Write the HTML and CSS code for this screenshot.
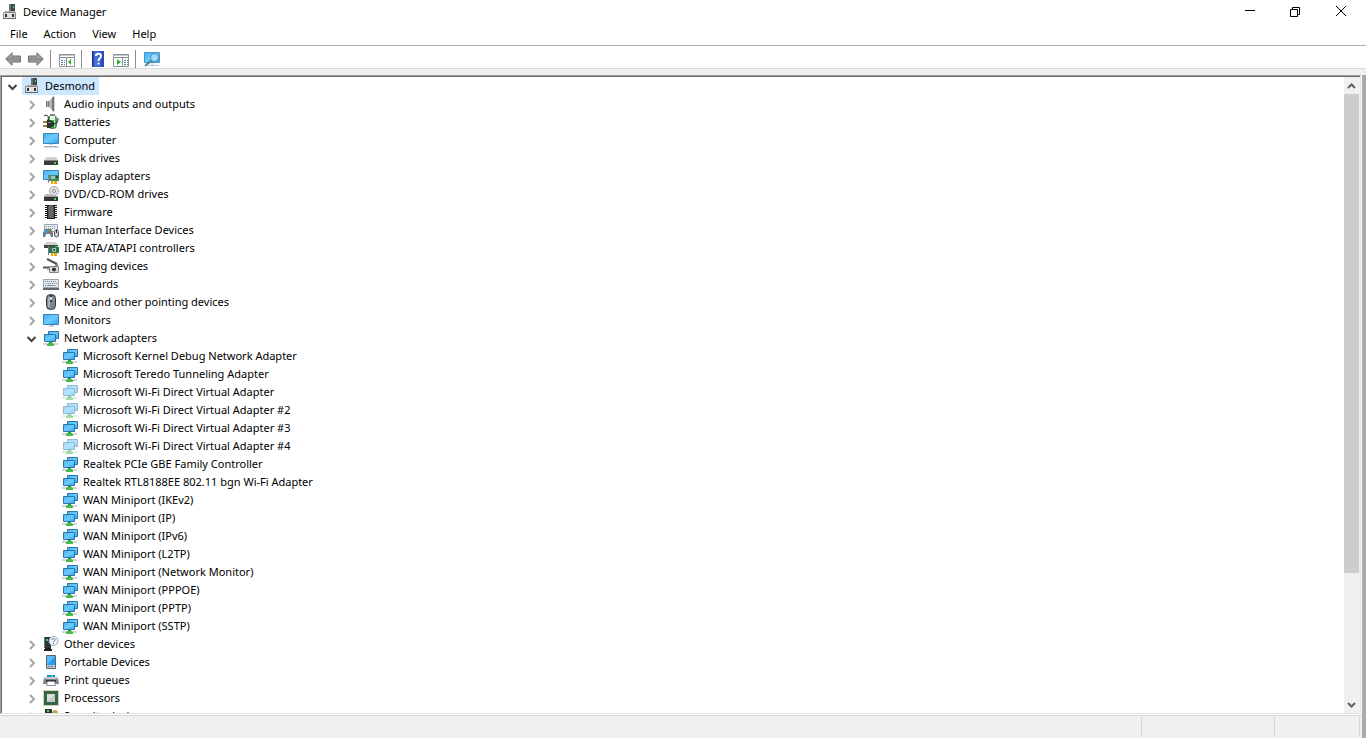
FILE: index.html
```
<!DOCTYPE html>
<html lang="en">
<head>
  <meta charset="UTF-8">
  <title>Device Manager</title>
  <link rel="stylesheet" href="styles.css">
</head>
<body>

<!-- Icon set, all on a 16px grid -->
<svg class="sprite" aria-hidden="true">
  <defs>
    <linearGradient id="screen" x1="0" y1="0" x2="1" y2="1">
      <stop offset="0" stop-color="#3fb0f5"/>
      <stop offset="0.5" stop-color="#6ccbff"/>
      <stop offset="1" stop-color="#2ea5f3"/>
    </linearGradient>
    <linearGradient id="arrowFill" x1="0" y1="0" x2="0" y2="1">
      <stop offset="0" stop-color="#c4c4c4"/>
      <stop offset="0.5" stop-color="#8a8a8a"/>
      <stop offset="1" stop-color="#b8b8b8"/>
    </linearGradient>
    <linearGradient id="helpFill" x1="0" y1="0" x2="1" y2="0">
      <stop offset="0" stop-color="#2438a0"/>
      <stop offset="0.3" stop-color="#4a74dc"/>
      <stop offset="1" stop-color="#2746b8"/>
    </linearGradient>
  </defs>

  <symbol id="i-right" viewBox="0 0 16 16"><path d="M7 5l4 4-4 4" fill="none" stroke="#a6a6a6" stroke-width="2"/></symbol>
  <symbol id="i-down" viewBox="0 0 16 16"><path d="M4.500 7l4 4 4-4" fill="none" stroke="#404040" stroke-width="2"/></symbol>

  <symbol id="i-device" viewBox="0 0 16 16">
    <path d="M7 0h6v8H7z" fill="#42464a"/><path d="M7 0h2v8H7z" fill="#6b7074"/><path d="M11 2h1v2h-1z" fill="#58d568"/>
    <path d="M3 7h10v2H3z" fill="#a9a9a9"/><path d="M1.500 8.500h12v6h-12z" fill="#e2e2e2" stroke="#8b8b8b"/><path d="M1 14h13v1H1z" fill="#666"/>
    <path d="M3 10h2v3H3zM10 10h2v3h-2z" fill="#303030"/>
  </symbol>
  <symbol id="i-audio" viewBox="0 0 16 16">
    <path d="M3 5h3v6H3z" fill="#737b82"/><path d="M6 5l5-5v16l-5-5z" fill="#aeb3b7"/>
    <path d="M9 2l2-2v16l-2-2z" fill="#747b81"/><path d="M11 1h1v14h-1z" fill="#cfd2d4"/><path d="M4 5h1v6H4z" fill="#a5acb2"/>
  </symbol>
  <symbol id="i-battery" viewBox="0 0 16 16">
    <rect x="5.500" y="1.500" width="8" height="13" rx="3" fill="#2fbd40" stroke="#66736c"/>
    <path d="M7 2h5v4H7z" fill="#e4f3e5"/><path d="M7 0h5v1H7z" fill="#858d88"/><path d="M11 6h1v7h-1z" fill="#9af09c"/>
    <path d="M0 7h4v2H0zM0 11h4v2H0z" fill="#a87e32"/>
    <path d="M4 6h3l4 2v4l-4 2H4z" fill="#303030"/><path d="M5 8h3v1H5z" fill="#888"/>
    <path d="M10 10c5 0 5-3 5-6M1 2c3-2 5 0 4 4" fill="none" stroke="#222"/>
  </symbol>
  <symbol id="i-computer" viewBox="0 0 16 16">
    <path d="M.5 1.500h15v10H.5z" fill="url(#screen)" stroke="#3e86b8"/>
    <path d="M6 12h4v1H6z" fill="#c5d4df"/><path d="M1 14h14v1H1z" fill="#9fb8c9"/><path d="M0 15h16v1H0z" fill="#d5dde3"/>
  </symbol>
  <symbol id="i-monitor" viewBox="0 0 16 16">
    <path d="M.5 2.500h15v10H.5z" fill="url(#screen)" stroke="#3b7fae"/>
    <path d="M7 13h3v1H7z" fill="#a7b8c4"/><path d="M5 14h7v1H5z" fill="#cfdbe3"/>
  </symbol>
  <symbol id="i-disk" viewBox="0 0 16 16">
    <path d="M3 7h10l2 3H1z" fill="#d2d2d2"/><path d="M1 10h14v5H1z" fill="#3b3b3b"/><path d="M1 10h14v1H1z" fill="#858585"/><path d="M11 12h2v2h-2z" fill="#3fd84f"/>
  </symbol>
  <symbol id="i-display" viewBox="0 0 16 16">
    <path d="M.5 2.500h15v9H.5z" fill="url(#screen)" stroke="#3e86b8"/>
    <path d="M6 7h10v6H6z" fill="#3d8b68"/><path d="M8 8h4v3H8z" fill="#9bc7a9"/><path d="M13 8h2v2h-2z" fill="#234f3c"/><path d="M5 6h1v9H5z" fill="#888"/>
    <path d="M8 13h6v3H8z" fill="#eea31b"/><path d="M10 13h1v3h-1z" fill="#fff0a0"/>
  </symbol>
  <symbol id="i-dvd" viewBox="0 0 16 16">
    <circle cx="11" cy="5" r="4.500" fill="#dfe1e2" stroke="#a8a8a8"/><circle cx="11" cy="5" r="1.500" fill="#fff" stroke="#888"/>
    <path d="M3 8h3l4 2h5H1z" fill="#b9b9b9"/><path d="M1 10h14v5H1z" fill="#343434"/><path d="M1 10h14v1H1z" fill="#999"/><path d="M11 12h2v2h-2z" fill="#3fd84f"/>
  </symbol>
  <symbol id="i-firmware" viewBox="0 0 16 16">
    <path d="M4 1h8v14H4z" fill="#505050"/><path d="M6 2h4v12H6z" fill="#666"/>
    <path d="M2 1.500h2M2 3.500h2M2 5.500h2M2 7.500h2M2 9.500h2M2 11.500h2M2 13.500h2M12 1.500h2M12 3.500h2M12 5.500h2M12 7.500h2M12 9.500h2M12 11.500h2M12 13.500h2" stroke="#111"/>
    <path d="M4.500 1v14M11.500 1v14M4 14.500h8M4 1.500h2M10 1.500h2" stroke="#222"/>
  </symbol>
  <symbol id="i-hid" viewBox="0 0 16 16">
    <path d="M1.500 2.500h13v7h-13z" fill="#e4ecf2" stroke="#9aa5ae"/>
    <path d="M3 4.500h10M3 6.500h10" stroke="#8c98a2" stroke-dasharray="1 1"/>
    <path d="M0 15v-4l2-4h6l2 4v4H8l-1-3H3l-1 3z" fill="#6c7a88"/>
    <path d="M2 8h2v3H2z" fill="#38a9ed"/><path d="M6 9h2v2H6z" fill="#e1502c"/><path d="M5 8h2v1H5z" fill="#44b84c"/>
    <path d="M11.500 14V9.500l2-2 2 2V14l-2 1z" fill="#cdd3d8" stroke="#48535c"/><path d="M13 8h1v3h-1z" fill="#333"/>
  </symbol>
  <symbol id="i-ide" viewBox="0 0 16 16">
    <path d="M3 2h10l2 3H1z" fill="#d3d3d3"/><path d="M1 5h14v3H1z" fill="#444"/>
    <path d="M6 7h10v6H6z" fill="#26784c"/><path d="M9 8h4v4H9z" fill="#98c1a3"/><path d="M10 9h2v2h-2z" fill="#38654a"/><path d="M12 6h3v1h-3z" fill="#4de36b"/>
    <path d="M5 6h1v9H5z" fill="#777"/><path d="M8 13h6v3H8z" fill="#eea31b"/><path d="M10 13h1v3h-1z" fill="#fff0a0"/>
  </symbol>
  <symbol id="i-imaging" viewBox="0 0 16 16">
    <path d="M4 1l10 5" stroke="#555" stroke-width="2"/><path d="M0 9.500h6" stroke="#555" stroke-width="2"/><path d="M4 11h3v1H4z" fill="#aaa"/>
    <path d="M6.500 8.500h9v6h-9z" fill="#d9d9d9" stroke="#858585"/><circle cx="11" cy="11.500" r="2" fill="#333"/><path d="M12 6h3v2h-3z" fill="#888"/>
  </symbol>
  <symbol id="i-keyboard" viewBox="0 0 16 16">
    <path d="M.5 3.500h15v8H.5z" fill="#e2e7eb" stroke="#9aa4ad"/><path d="M0 12h16v2H0z" fill="#5e6871"/>
    <path d="M2 5.500h12M2 9.500h12" stroke="#7c8790" stroke-dasharray="1 1"/><path d="M3 7.500h11" stroke="#7c8790" stroke-dasharray="1 1"/><path d="M5 9.500h6" stroke="#7c8790"/>
  </symbol>
  <symbol id="i-mouse" viewBox="0 0 16 16">
    <rect x="3.500" y=".5" width="9" height="15" rx="4" fill="#7d8792" stroke="#30363c"/>
    <path d="M5 3h2v10H5z" fill="#a9b1b9"/><path d="M7 1h2v7H7z" fill="#30363c"/><path d="M7 3h2v3H7z" fill="#d3d9df"/>
  </symbol>
  <symbol id="i-network" viewBox="0 0 16 16">
    <path d="M5.500 1.500h10v7h-10z" fill="url(#screen)" stroke="#2b78a8"/>
    <path d="M1.500 4.500h11v7h-11z" fill="url(#screen)" stroke="#2b78a8"/>
    <path d="M0 13h15v2H0z" fill="#d4d4d4"/><path d="M6 12h3v1H6z" fill="#27963a"/><path d="M5 13h5v1h1v2H4v-2h1z" fill="#40bd4b"/>
  </symbol>
  <symbol id="i-other" viewBox="0 0 16 16">
    <path d="M1 1h7v11H1z" fill="#303334"/><path d="M1 1h1v11H1z" fill="#777"/><path d="M3 3h2v2H3z" fill="#43d858"/><path d="M2 12h6v2H2zM1 13h8v2H1z" fill="#202020"/>
    <circle cx="10.500" cy="5" r="4.500" fill="#f5f8fb" stroke="#9aa4ad"/>
    <path d="M9 4c0-2 3-2 3 0 0 1-1.500 1-1.500 2M10.500 7v1" fill="none" stroke="#2475b5"/>
  </symbol>
  <symbol id="i-portable" viewBox="0 0 16 16">
    <path d="M3.500 1.500h9v13h-9z" fill="#b9c6cf" stroke="#5a666f"/><path d="M4 2h8v9H4z" fill="#27a0f2"/><path d="M4 2h8L4 11z" fill="#5bbdf8"/><path d="M5 12.500h6" stroke="#71808b" stroke-dasharray="2 1"/>
  </symbol>
  <symbol id="i-printer" viewBox="0 0 16 16">
    <path d="M4 3h8v3H4z" fill="#168ee0"/><path d="M8 3h2v2H8z" fill="#3ece70"/><path d="M1 5h14l1 7H0z" fill="#7c858c"/><path d="M1 5h14v2H1z" fill="#c5cbd0"/>
    <path d="M3 8h10v2H3z" fill="#30353a"/><path d="M4.500 9.500h7l1 4h-9z" fill="#fff" stroke="#8e969c"/>
  </symbol>
  <symbol id="i-cpu" viewBox="0 0 16 16">
    <path d="M.5.5h15v15H.5z" fill="none" stroke="#b8a25b" stroke-dasharray="1 1"/><path d="M1 1h14v14H1z" fill="#326448"/><path d="M4 4h8v8H4z" fill="#dcdedc"/><path d="M4 12l8-8v8z" fill="#c4c7c4"/>
  </symbol>
  <symbol id="i-security" viewBox="0 0 16 16">
    <path d="M2 1h7v14H2z" fill="#303334"/><path d="M4 2h2v2H4z" fill="#43d858"/><circle cx="12" cy="5" r="3" fill="#c3a65d"/><path d="M11 7h2v7h-2z" fill="#c3a65d"/>
  </symbol>

  <symbol id="i-back" viewBox="0 0 16 16"><path d="M.7 8L7 1.700V5h8.500v6H7v3.300z" fill="url(#arrowFill)" stroke="#6c6c6c"/></symbol>
  <symbol id="i-forward" viewBox="0 0 16 16"><path d="M15.300 8L9 1.700V5H.5v6H9v3.300z" fill="url(#arrowFill)" stroke="#6c6c6c"/></symbol>
  <symbol id="i-tree" viewBox="0 0 16 16">
    <path d="M.5 3.500h15v12H.5z" fill="#fff" stroke="#8a929a"/><path d="M1 4h14v1H1z" fill="#c3cad0"/><path d="M1 6.500h14M7.500 7v8" stroke="#8a929a"/>
    <path d="M2 9.500h4M2 11.500h4M2 13.500h4" stroke="#537da8" stroke-dasharray="2 1"/><path d="M12 8v6l-3-3z" fill="#2bb42b"/>
  </symbol>
  <symbol id="i-actions" viewBox="0 0 16 16">
    <path d="M.5 3.500h15v12H.5z" fill="#fff" stroke="#8a929a"/><path d="M1 4h14v1H1z" fill="#c3cad0"/><path d="M1 6.500h14M9.500 7v8" stroke="#8a929a"/>
    <path d="M11 9.500h4M11 11.500h4M11 13.500h4" stroke="#537da8" stroke-dasharray="2 1"/><path d="M4 8v6l4-3z" fill="#2bb42b"/>
  </symbol>
  <symbol id="i-help" viewBox="0 0 16 16">
    <path d="M2 0h12v16H2z" fill="url(#helpFill)"/><path d="M2 0h1v16H2z" fill="#1d2b80"/>
    <path d="M6 5c0-3 5-3 5 0 0 2-2.500 2-2.500 5M8.500 11.500v2" fill="none" stroke="#fff" stroke-width="2"/>
  </symbol>
  <symbol id="i-scan" viewBox="0 0 16 16">
    <path d="M.5 1.500h15v10H.5z" fill="url(#screen)" stroke="#4a96c6"/><path d="M4 14h11v1H4z" fill="#b4c2cc"/><path d="M7 12h3v2H7z" fill="#dce3e8"/>
    <path d="M7.500 9.500L1 15" stroke="#527f9e" stroke-width="2"/><circle cx="10.500" cy="6.500" r="4" fill="#a5dcfb" stroke="#4b89ad"/>
  </symbol>
</svg>

<header class="title-bar">
  <svg class="icon"><use href="#i-device"/></svg>
  <h1>Device Manager</h1>
  <div class="window-buttons">
    <button aria-label="Minimize"><svg viewBox="0 0 12 12"><path d="M2 4.500h10"/></svg></button>
    <button aria-label="Restore"><svg viewBox="0 0 12 12"><path d="M1.500 3.500h7v7h-7zM3.500 3V1.500h7v7H9"/></svg></button>
    <button aria-label="Close"><svg viewBox="0 0 12 12"><path d="M1 0l10 10M11 0L1 10"/></svg></button>
  </div>
</header>

<nav class="menu-bar">
  <button>File</button>
  <button>Action</button>
  <button>View</button>
  <button>Help</button>
</nav>

<div class="toolbar">
  <button aria-label="Back"><svg class="icon"><use href="#i-back"/></svg></button>
  <button aria-label="Forward"><svg class="icon"><use href="#i-forward"/></svg></button>
  <span class="separator"></span>
  <button aria-label="Show console tree"><svg class="icon"><use href="#i-tree"/></svg></button>
  <span class="separator"></span>
  <button aria-label="Help"><svg class="icon"><use href="#i-help"/></svg></button>
  <button aria-label="Show action pane"><svg class="icon"><use href="#i-actions"/></svg></button>
  <span class="separator"></span>
  <button aria-label="Scan for hardware changes"><svg class="icon"><use href="#i-scan"/></svg></button>
</div>

<main class="workspace">
  <div class="tree-pane">
    <ul class="tree">
      <li>
        <div class="row"><button class="twisty" aria-label="Collapse"><svg class="icon"><use href="#i-down"/></svg></button><span class="node selected"><svg class="icon"><use href="#i-device"/></svg>Desmond</span></div>
        <ul>
          <li class="row"><button class="twisty" aria-label="Expand"><svg class="icon"><use href="#i-right"/></svg></button><span class="node"><svg class="icon"><use href="#i-audio"/></svg>Audio inputs and outputs</span></li>
          <li class="row"><button class="twisty" aria-label="Expand"><svg class="icon"><use href="#i-right"/></svg></button><span class="node"><svg class="icon"><use href="#i-battery"/></svg>Batteries</span></li>
          <li class="row"><button class="twisty" aria-label="Expand"><svg class="icon"><use href="#i-right"/></svg></button><span class="node"><svg class="icon"><use href="#i-computer"/></svg>Computer</span></li>
          <li class="row"><button class="twisty" aria-label="Expand"><svg class="icon"><use href="#i-right"/></svg></button><span class="node"><svg class="icon"><use href="#i-disk"/></svg>Disk drives</span></li>
          <li class="row"><button class="twisty" aria-label="Expand"><svg class="icon"><use href="#i-right"/></svg></button><span class="node"><svg class="icon"><use href="#i-display"/></svg>Display adapters</span></li>
          <li class="row"><button class="twisty" aria-label="Expand"><svg class="icon"><use href="#i-right"/></svg></button><span class="node"><svg class="icon"><use href="#i-dvd"/></svg>DVD/CD-ROM drives</span></li>
          <li class="row"><button class="twisty" aria-label="Expand"><svg class="icon"><use href="#i-right"/></svg></button><span class="node"><svg class="icon"><use href="#i-firmware"/></svg>Firmware</span></li>
          <li class="row"><button class="twisty" aria-label="Expand"><svg class="icon"><use href="#i-right"/></svg></button><span class="node"><svg class="icon"><use href="#i-hid"/></svg>Human Interface Devices</span></li>
          <li class="row"><button class="twisty" aria-label="Expand"><svg class="icon"><use href="#i-right"/></svg></button><span class="node"><svg class="icon"><use href="#i-ide"/></svg>IDE ATA/ATAPI controllers</span></li>
          <li class="row"><button class="twisty" aria-label="Expand"><svg class="icon"><use href="#i-right"/></svg></button><span class="node"><svg class="icon"><use href="#i-imaging"/></svg>Imaging devices</span></li>
          <li class="row"><button class="twisty" aria-label="Expand"><svg class="icon"><use href="#i-right"/></svg></button><span class="node"><svg class="icon"><use href="#i-keyboard"/></svg>Keyboards</span></li>
          <li class="row"><button class="twisty" aria-label="Expand"><svg class="icon"><use href="#i-right"/></svg></button><span class="node"><svg class="icon"><use href="#i-mouse"/></svg>Mice and other pointing devices</span></li>
          <li class="row"><button class="twisty" aria-label="Expand"><svg class="icon"><use href="#i-right"/></svg></button><span class="node"><svg class="icon"><use href="#i-monitor"/></svg>Monitors</span></li>
          <li>
            <div class="row"><button class="twisty" aria-label="Collapse"><svg class="icon"><use href="#i-down"/></svg></button><span class="node"><svg class="icon"><use href="#i-network"/></svg>Network adapters</span></div>
            <ul class="leaves">
              <li class="row"><span class="node"><svg class="icon"><use href="#i-network"/></svg>Microsoft Kernel Debug Network Adapter</span></li>
              <li class="row"><span class="node"><svg class="icon"><use href="#i-network"/></svg>Microsoft Teredo Tunneling Adapter</span></li>
              <li class="row"><span class="node hidden-device"><svg class="icon"><use href="#i-network"/></svg>Microsoft Wi-Fi Direct Virtual Adapter</span></li>
              <li class="row"><span class="node hidden-device"><svg class="icon"><use href="#i-network"/></svg>Microsoft Wi-Fi Direct Virtual Adapter #2</span></li>
              <li class="row"><span class="node"><svg class="icon"><use href="#i-network"/></svg>Microsoft Wi-Fi Direct Virtual Adapter #3</span></li>
              <li class="row"><span class="node hidden-device"><svg class="icon"><use href="#i-network"/></svg>Microsoft Wi-Fi Direct Virtual Adapter #4</span></li>
              <li class="row"><span class="node"><svg class="icon"><use href="#i-network"/></svg>Realtek PCIe GBE Family Controller</span></li>
              <li class="row"><span class="node"><svg class="icon"><use href="#i-network"/></svg>Realtek RTL8188EE 802.11 bgn Wi-Fi Adapter</span></li>
              <li class="row"><span class="node"><svg class="icon"><use href="#i-network"/></svg>WAN Miniport (IKEv2)</span></li>
              <li class="row"><span class="node"><svg class="icon"><use href="#i-network"/></svg>WAN Miniport (IP)</span></li>
              <li class="row"><span class="node"><svg class="icon"><use href="#i-network"/></svg>WAN Miniport (IPv6)</span></li>
              <li class="row"><span class="node"><svg class="icon"><use href="#i-network"/></svg>WAN Miniport (L2TP)</span></li>
              <li class="row"><span class="node"><svg class="icon"><use href="#i-network"/></svg>WAN Miniport (Network Monitor)</span></li>
              <li class="row"><span class="node"><svg class="icon"><use href="#i-network"/></svg>WAN Miniport (PPPOE)</span></li>
              <li class="row"><span class="node"><svg class="icon"><use href="#i-network"/></svg>WAN Miniport (PPTP)</span></li>
              <li class="row"><span class="node"><svg class="icon"><use href="#i-network"/></svg>WAN Miniport (SSTP)</span></li>
            </ul>
          </li>
          <li class="row"><button class="twisty" aria-label="Expand"><svg class="icon"><use href="#i-right"/></svg></button><span class="node"><svg class="icon"><use href="#i-other"/></svg>Other devices</span></li>
          <li class="row"><button class="twisty" aria-label="Expand"><svg class="icon"><use href="#i-right"/></svg></button><span class="node"><svg class="icon"><use href="#i-portable"/></svg>Portable Devices</span></li>
          <li class="row"><button class="twisty" aria-label="Expand"><svg class="icon"><use href="#i-right"/></svg></button><span class="node"><svg class="icon"><use href="#i-printer"/></svg>Print queues</span></li>
          <li class="row"><button class="twisty" aria-label="Expand"><svg class="icon"><use href="#i-right"/></svg></button><span class="node"><svg class="icon"><use href="#i-cpu"/></svg>Processors</span></li>
          <li class="row"><button class="twisty" aria-label="Expand"><svg class="icon"><use href="#i-right"/></svg></button><span class="node"><svg class="icon"><use href="#i-security"/></svg>Security devices</span></li>
        </ul>
      </li>
    </ul>
    <div class="scrollbar">
      <button aria-label="Scroll up"><svg viewBox="0 0 9 9"><path d="M1 7l3.500-3.500L8 7"/></svg></button>
      <div class="track"><div class="thumb"></div></div>
      <button aria-label="Scroll down"><svg viewBox="0 0 9 9"><path d="M1 3l3.500 3.500L8 3"/></svg></button>
    </div>
  </div>
  <footer class="status-bar">
    <span class="message"></span>
    <span class="cell"></span>
    <span class="cell small"></span>
  </footer>
</main>

</body>
</html>
```

FILE: styles.css
```
* {
  box-sizing: border-box;
}

body {
  margin: 0;
  height: 100vh;
  display: flex;
  flex-direction: column;
  overflow: hidden;
  background: #fff;
  color: #000;
  font-family: "Noto Sans", "Segoe UI", sans-serif;
  font-size: 11px;
  line-height: 18px;
}

button {
  display: flex;
  align-items: center;
  justify-content: center;
  margin: 0;
  padding: 0;
  border: none;
  background: none;
  color: inherit;
  font: inherit;
}

ul {
  list-style: none;
  margin: 0;
  padding: 0;
}

.sprite {
  position: absolute;
  width: 0;
  height: 0;
}

.icon {
  display: block;
  width: 16px;
  height: 16px;
  flex: none;
}

/* Title bar */
.title-bar {
  display: flex;
  align-items: center;
  height: 23px;
  padding-left: 2px;
  flex: none;
}

.title-bar h1 {
  margin: 0 0 0 5px;
  font-size: 11px;
  font-weight: normal;
}

.window-buttons {
  display: flex;
  margin-left: auto;
  padding-right: 2px;
}

.window-buttons button {
  width: 46px;
  height: 20px;
}

.window-buttons svg {
  width: 12px;
  height: 12px;
  fill: none;
  stroke: #000;
}

/* Menu */
.menu-bar {
  display: flex;
  height: 23px;
  padding: 0 2px;
  flex: none;
  border-bottom: 1px solid #b0b0b0;
}

.menu-bar button {
  padding: 2px 8px 0;
  height: 20px;
}

/* Toolbar */
.toolbar {
  display: flex;
  align-items: center;
  height: 29px;
  padding: 1px 1px 5px;
  flex: none;
  background: linear-gradient(#fff 22px, #d9d9d9 22px, #d9d9d9 23px, #f0f0f0 23px);
}

.toolbar button {
  width: 23px;
  height: 20px;
}

.toolbar .separator {
  width: 1px;
  height: 18px;
  margin: 0 4px 0 3px;
  background: #8c8c8c;
}

/* Tree and status bar, with the window edge on the right */
.workspace {
  flex: 1;
  min-height: 0;
  display: flex;
  flex-direction: column;
  border-right: 4px solid #aaa;
}

.tree-pane {
  flex: 1;
  min-height: 0;
  display: flex;
  margin: 0 1px 1px 0;
  border: 1px solid #a0a0a0;
  border-right-color: #e3e3e3;
  border-bottom-color: #e3e3e3;
}

.tree {
  flex: 1;
  overflow: hidden;
  border-top: 1px solid #696969;
  border-left: 1px solid #696969;
}

.tree ul {
  padding-left: 19px;
}

.tree .leaves {
  padding-left: 39px;
}

.row {
  display: flex;
  height: 18px;
}

.twisty {
  width: 20px;
  height: 18px;
}

.node {
  display: flex;
  align-items: center;
  gap: 5px;
  padding: 0 4px 0 2px;
  white-space: nowrap;
}

.selected {
  background: #cce8ff;
}

.hidden-device .icon {
  opacity: 0.5;
}

.scrollbar {
  display: flex;
  flex-direction: column;
  width: 16px;
  flex: none;
  border-top: 1px solid #696969;
  background: #f0f0f0;
}

.scrollbar button {
  width: 15px;
  height: 17px;
}

.scrollbar svg {
  width: 9px;
  height: 9px;
  fill: none;
  stroke: #606060;
  stroke-width: 2;
}

.track {
  flex: 1;
}

.thumb {
  width: 15px;
  height: calc(80% - 3px);
  background: #cdcdcd;
}

.status-bar {
  display: flex;
  height: 23px;
  padding: 1px 2px 1px 0;
  flex: none;
  border-top: 1px solid #d7d7d7;
  background: #f0f0f0;
}

.status-bar span {
  border-right: 1px solid #d7d7d7;
}

.message {
  flex: 1;
}

.cell {
  width: 133px;
}

.cell.small {
  width: 85px;
}
```
